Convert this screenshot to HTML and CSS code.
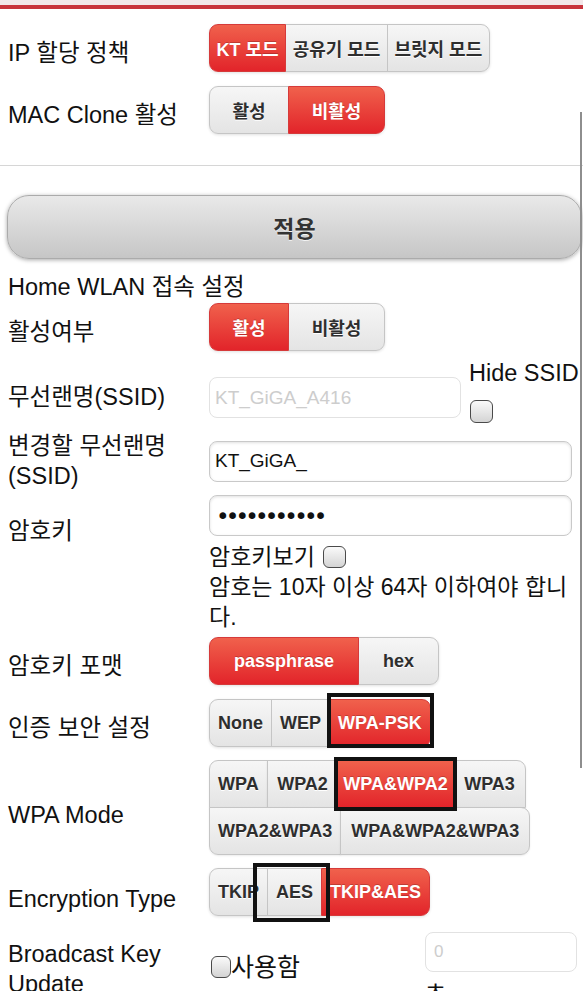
FILE: index.html
```html
<!DOCTYPE html>
<html lang="ko">
<head>
  <meta charset="UTF-8">
  <meta name="viewport" content="width=device-width, initial-scale=1.0">
  <title>Home WLAN 설정</title>
  <link rel="stylesheet" href="styles.css">
</head>
<body>
  <div class="topbar"></div>
  <div class="scroll-ind"></div>

  <section class="sec-top">
    <div class="row">
      <div class="lbl">IP 할당 정책</div>
      <div class="seg seg-ip">
        <span class="opt on">KT 모드</span><span class="opt">공유기 모드</span><span class="opt">브릿지 모드</span>
      </div>
    </div>
    <div class="row row-mac">
      <div class="lbl">MAC Clone 활성</div>
      <div class="seg seg-on">
        <span class="opt">활성</span><span class="opt on">비활성</span>
      </div>
    </div>
  </section>

  <hr class="divider">

  <button class="apply">적용</button>

  <div class="heading">Home WLAN 접속 설정</div>

  <div class="row row-active">
    <div class="lbl">활성여부</div>
    <div class="seg seg-on">
      <span class="opt on">활성</span><span class="opt">비활성</span>
    </div>
  </div>

  <div class="row row-ssid">
    <div class="lbl">무선랜명(SSID)</div>
    <input class="field field-ssid" type="text" placeholder="KT_GiGA_A416" disabled>
    <div class="hide-cell">
      <div class="hide-txt">Hide SSID</div>
      <span class="chk chk-hide"></span>
    </div>
  </div>

  <div class="row row-new">
    <div class="lbl lbl-2">변경할 무선랜명<br>(SSID)</div>
    <input class="field field-wide" type="text" value="KT_GiGA_">
  </div>

  <div class="row row-pw">
    <div class="lbl lbl-pw">암호키</div>
    <div class="pw-cell">
      <input class="field field-wide field-pw" type="password" value="abcdefghijk">
      <div class="pw-show">암호키보기 <span class="chk chk-show"></span></div>
      <div class="pw-msg">암호는 10자 이상 64자 이하여야 합니다.</div>
    </div>
  </div>

  <div class="row row-fmt">
    <div class="lbl">암호키 포맷</div>
    <div class="seg seg-fmt">
      <span class="opt on">passphrase</span><span class="opt">hex</span>
    </div>
  </div>

  <div class="row row-auth">
    <div class="lbl">인증 보안 설정</div>
    <div class="seg seg-auth">
      <span class="opt">None</span><span class="opt">WEP</span><span class="opt on mark mark-psk">WPA-PSK</span>
    </div>
  </div>

  <div class="row row-wpa">
    <div class="lbl">WPA Mode</div>
    <div class="seg seg-wpa">
      <span class="opt">WPA</span><span class="opt">WPA2</span><span class="opt on mark mark-wpa">WPA&amp;WPA2</span><span class="opt">WPA3</span><span class="opt">WPA2&amp;WPA3</span><span class="opt">WPA&amp;WPA2&amp;WPA3</span>
    </div>
  </div>

  <div class="row row-enc">
    <div class="lbl">Encryption Type</div>
    <div class="seg seg-enc">
      <span class="opt">TKIP</span><span class="opt mark mark-aes">AES</span><span class="opt on">TKIP&amp;AES</span>
    </div>
  </div>

  <div class="row row-bcast">
    <div class="lbl lbl-2">Broadcast Key<br>Update</div>
    <div class="use-cell"><span class="chk chk-use"></span>사용함</div>
    <div class="sec-cell">
      <input class="field field-sec" type="text" placeholder="0" disabled>
      <div class="sec-unit">초</div>
    </div>
  </div>
</body>
</html>
```

FILE: styles.css
```css
body {
  margin: 0;
  height: 991px;
  overflow: hidden;
  background: #fff;
  color: #111;
  font-family: "Liberation Sans", "Noto Sans CJK KR", sans-serif;
}

.topbar {
  height: 5px;
  background: #f2e6e8;
  border-bottom: 4px solid #c8333b;
}

.scroll-ind {
  position: absolute;
  left: 580px;
  top: 112px;
  width: 2px;
  height: 656px;
  background: #8e8e8e;
}

.row {
  display: grid;
  grid-template-columns: 201px auto;
  justify-content: start;
  align-items: center;
  padding-left: 8px;
}

.lbl {
  font-size: 23.5px;
  line-height: 28px;
  padding-top: 9px;
}

.lbl-2 {
  line-height: 30px;
  padding-top: 0;
}

.sec-top {
  padding-top: 15px;
}

.row-mac {
  margin-top: 14px;
}

.divider {
  margin: 31px 0 0;
  border: 0;
  border-top: 1px solid #d6d6d6;
  height: 0;
}

.apply {
  display: block;
  margin: 29px 0 0 7px;
  width: 575px;
  height: 64px;
  border: 1px solid #ababab;
  border-radius: 22px;
  background: linear-gradient(#e9e9e9, #c6c6c6);
  box-shadow: 0 1px 4px rgba(0, 0, 0, 0.35);
  color: #333;
  font-family: inherit;
  font-size: 23px;
  font-weight: bold;
  text-shadow: 0 1px 0 #f4f4f4;
}

.heading {
  margin-top: 14px;
  padding-left: 8px;
  font-size: 23.5px;
  line-height: 28px;
}

/* segmented buttons */
.seg {
  display: inline-flex;
  flex-wrap: wrap;
  border-radius: 9px;
  box-shadow: 0 1px 3px rgba(0, 0, 0, 0.12);
}

.opt {
  display: flex;
  align-items: center;
  justify-content: center;
  height: 46px;
  padding: 0 8px;
  border: 1px solid #c5c5c5;
  background: linear-gradient(#f6f6f6, #e4e4e4);
  color: #2e2e2e;
  font-size: 18px;
  font-weight: bold;
  text-shadow: 0 1px 0 #fff;
  white-space: nowrap;
}

.opt + .opt {
  margin-left: -1px;
}

.opt:first-child {
  border-radius: 9px 0 0 9px;
}

.opt:last-child {
  border-radius: 0 9px 9px 0;
}

.opt.on {
  position: relative;
  z-index: 1;
  background: linear-gradient(#f0614c, #e2242a);
  border-color: #d63a3a;
  color: #fff;
  text-shadow: 0 -1px 0 rgba(0, 0, 0, 0.2);
}

.seg-ip .opt { padding: 0 6.5px; }
.seg-on .opt { padding: 0 22.5px; }
.seg-fmt .opt { padding: 0 24px; }

.seg-wpa {
  width: 324px;
  box-shadow: none;
}

.seg-wpa .opt { padding: 0 8px; box-shadow: 0 1px 2px rgba(0, 0, 0, 0.08); }
.seg-wpa .opt:nth-child(2) { padding: 0 9.5px; }
.seg-wpa .opt:nth-child(3) { padding: 0 5px; }
.seg-wpa .opt:nth-child(4) { padding: 0 10.5px; }
.seg-wpa .opt:nth-child(6) { padding: 0 10px; }
.seg-wpa .opt:first-child { border-radius: 9px 0 0 0; }
.seg-wpa .opt:nth-child(4) { border-radius: 0 9px 0 0; }
.seg-wpa .opt:nth-child(n+5) { margin-top: -1px; }
.seg-wpa .opt:nth-child(5) { margin-left: 0; border-radius: 0 0 0 9px; }

/* hand-drawn highlight boxes */
.mark {
  position: relative;
}

.mark::after {
  content: "";
  position: absolute;
  z-index: 3;
  border: 4px solid #111;
}

.mark-psk::after { top: -7px; bottom: -2px; left: -3px; right: -4px; }
.mark-wpa::after { top: -4px; bottom: -4px; left: -4px; right: -4px; }
.mark-aes::after { top: -6px; bottom: -7px; left: -15px; right: -9px; }

/* inputs */
.field {
  box-sizing: border-box;
  height: 41px;
  margin: 0;
  padding: 0 5px;
  border: 1px solid #c9c9c9;
  border-radius: 8px;
  background: #fff;
  box-shadow: inset 0 1px 3px rgba(0, 0, 0, 0.12);
  color: #111;
  font-family: inherit;
  font-size: 19px;
}

.field:disabled {
  border-color: #e2e2e2;
  box-shadow: none;
}

.field::placeholder {
  color: #cdcdcd;
}

.field-wide {
  width: 363px;
}

.field-pw {
  padding-left: 6px;
  font-family: "DejaVu Sans", sans-serif;
  font-size: 23px;
  letter-spacing: -3.8px;
}

.chk {
  display: inline-block;
  box-sizing: border-box;
  width: 23px;
  height: 23px;
  border: 1.5px solid #4a4a4a;
  border-radius: 6px;
  background: linear-gradient(#fafafa, #d4d4d4);
  vertical-align: middle;
}

.row-active {
  margin-top: 2px;
}

.row-ssid {
  grid-template-columns: 201px 252px auto;
  align-items: start;
  margin-top: 9px;
}

.row-ssid .lbl {
  padding-top: 23px;
}

.field-ssid {
  width: 252px;
  margin-top: 17px;
}

.hide-cell {
  margin-left: 8px;
}

.hide-txt {
  font-size: 23.5px;
  line-height: 26px;
  white-space: nowrap;
}

.chk-hide {
  margin-top: 14px;
  margin-left: 1px;
}

.row-new {
  margin-top: 8px;
}

.row-pw {
  align-items: start;
  margin-top: 4px;
}

.lbl-pw {
  padding-top: 21px;
  line-height: 30px;
}

.pw-cell {
  width: 363px;
}

.pw-show,
.pw-msg {
  font-size: 23px;
  line-height: 30px;
}

.pw-show {
  margin-top: 6px;
}

.chk-show {
  width: 23px;
  height: 22px;
  margin-left: 2px;
  margin-top: -4px;
}

.row-fmt { margin-top: 5px; }
.row-auth { margin-top: 14px; }
.row-wpa { margin-top: 13px; }
.row-enc { margin-top: 13px; }

.row-wpa .lbl,
.row-enc .lbl {
  padding-top: 14px;
}

.row-bcast {
  grid-template-columns: 201px 216px 152px;
  align-items: start;
  margin-top: 16px;
}

.row-bcast .lbl {
  padding-top: 7px;
}

.use-cell {
  margin-top: 20px;
  padding-left: 2px;
  font-size: 25px;
  line-height: 30px;
  white-space: nowrap;
}

.chk-use {
  width: 20px;
  height: 22px;
  margin-top: -4px;
}

.field-sec {
  width: 152px;
  height: 40px;
  padding-left: 8px;
  font-size: 17px;
}

.sec-unit {
  margin-top: 9px;
  font-size: 23px;
  line-height: 26px;
}
```
